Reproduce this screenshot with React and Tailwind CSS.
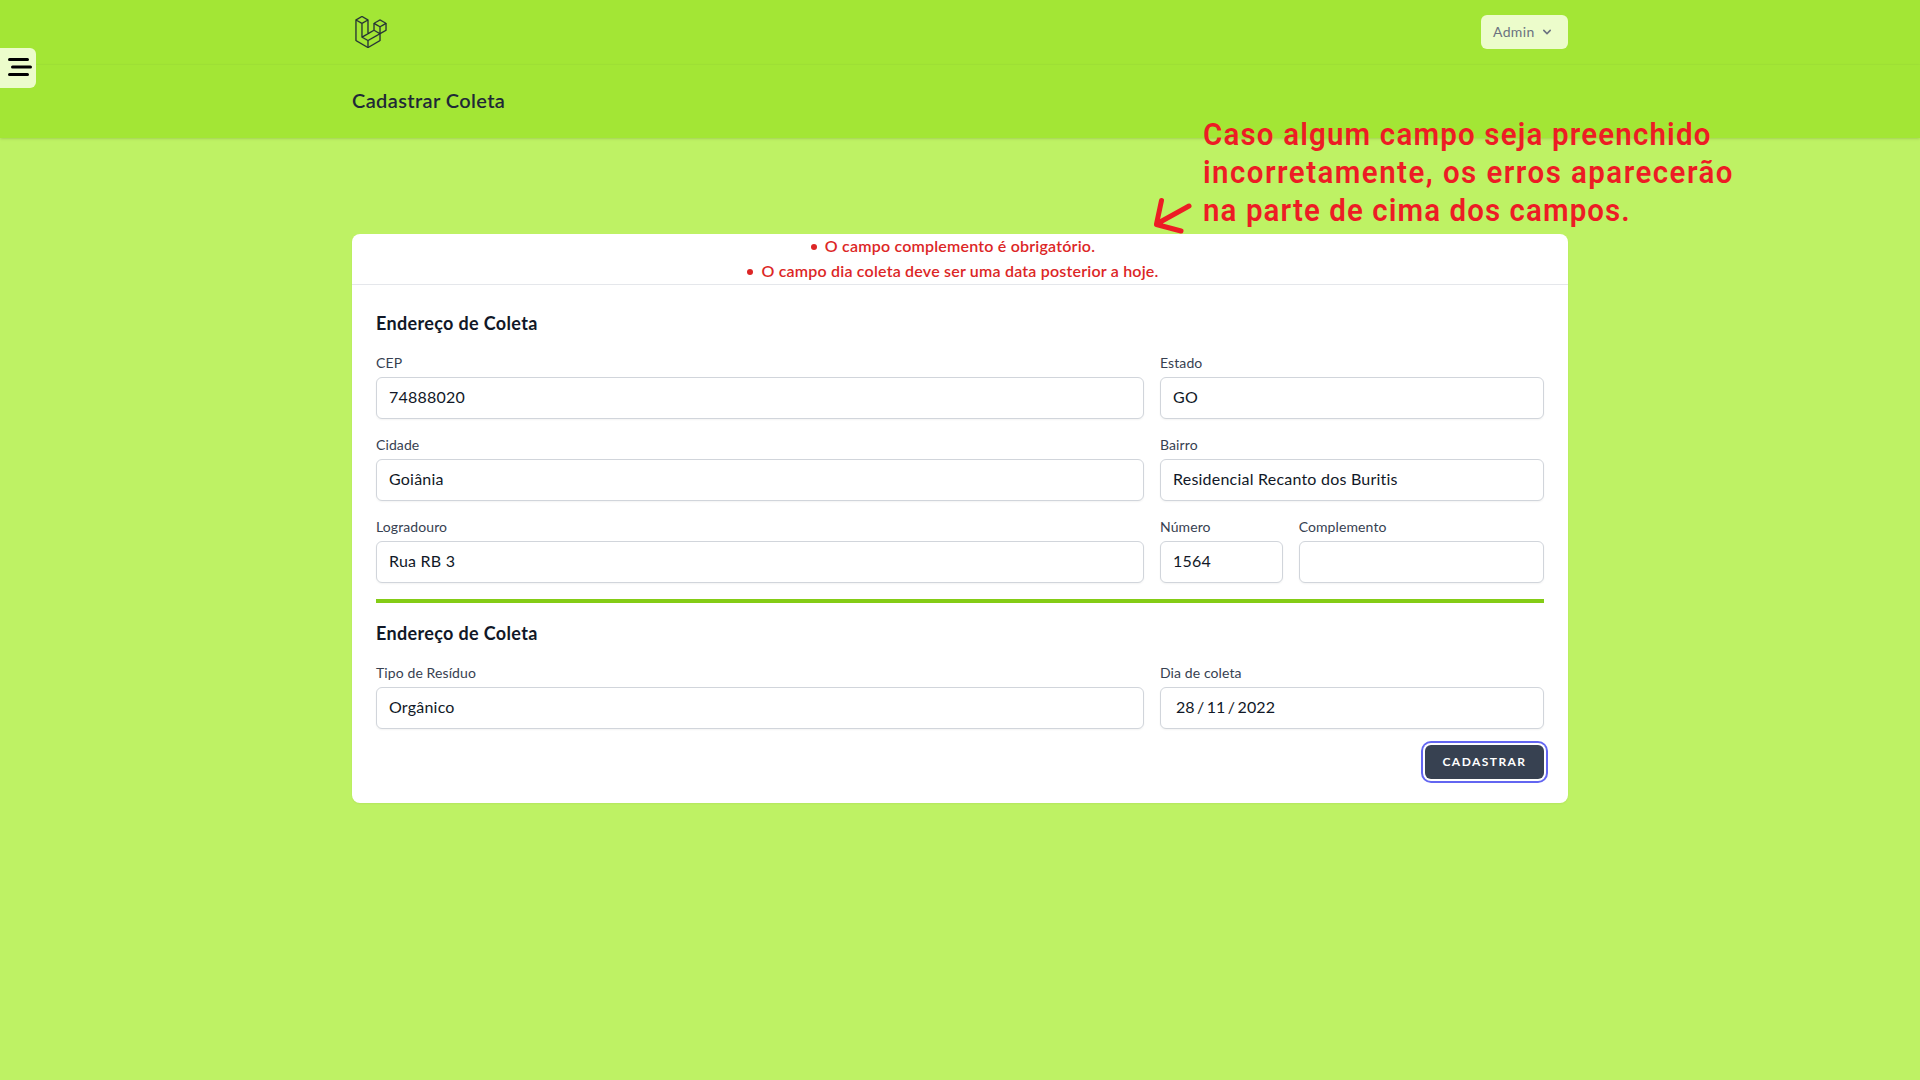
import { SiLaravel } from "react-icons/si";

const Field = ({ label, value, date }) => (
  <div>
    <label className="block text-sm leading-5 tracking-[0.1px] text-[#374151]"><span>{label}</span></label>
    <div className="mt-1 flex h-[42px] items-center rounded-md border border-[#d1d5db] bg-white px-3 pb-0.5 text-base leading-6 text-[#111827] shadow-[0_1px_2px_0_rgba(0,0,0,0.05)]">
      {date ? (
        <span className="ml-[3px] flex gap-[2.5px]">
          <span>28</span><span>/</span><span>11</span><span>/</span><span className="tracking-[0.1px]">2022</span>
        </span>
      ) : (
        <span className="tracking-[0.22px]">{value}</span>
      )}
    </div>
  </div>
);

const ErrorItem = ({ children }) => (
  <li className="-ml-3.5 flex h-[25px] items-center gap-2 pb-0.5">
    <i className="mt-0.5 size-1.5 rounded-full bg-[#dc2626]" />
    <span className="tracking-[0.2px]">{children}</span>
  </li>
);

export default function App() {
  return (
    <div className="relative min-h-screen bg-[#bef264] font-['Lato',sans-serif] text-[#111827]">
      <nav className="h-[65px] border-b border-[#a1e336] bg-[#a3e635]">
        <div className="mx-auto flex h-16 max-w-7xl items-center justify-between px-8">
          <SiLaravel className="ml-[3px] size-8 text-[#1f2937]" stroke="currentColor" strokeWidth="0.2" />
          <button className="flex h-[34px] w-[87px] items-center rounded-md bg-[#ecfccb] pl-[12px] text-sm leading-4 text-[#6b7280]">
            <span className="w-[46px] text-left tracking-[0.35px]">Admin</span>
            <svg className="size-4" viewBox="0 0 20 20" fill="currentColor">
              <path fillRule="evenodd" clipRule="evenodd" d="M5.293 7.293a1 1 0 011.414 0L10 10.586l3.293-3.293a1 1 0 111.414 1.414l-4 4a1 1 0 01-1.414 0l-4-4a1 1 0 010-1.414z" />
            </svg>
          </button>
        </div>
      </nav>
      <header className="bg-[#a3e635] shadow-[0_1px_3px_0_rgba(0,0,0,0.1),0_1px_2px_-1px_rgba(0,0,0,0.1)]">
        <div className="mx-auto max-w-7xl px-8 pt-[23px] pb-[25px]">
          <h2 className="text-xl leading-[25px] font-semibold tracking-[0.38px] text-[#1f2937]"><span>Cadastrar Coleta</span></h2>
        </div>
      </header>

      <main className="mx-auto max-w-7xl px-8 py-24">
        <div className="rounded-lg bg-white shadow-[0_1px_2px_0_rgba(0,0,0,0.05)]">
          <ul className="flex h-[51px] list-none flex-col items-center border-b border-[#e5e7eb] font-semibold text-[#dc2626]">
            <ErrorItem>O campo complemento é obrigatório.</ErrorItem>
            <ErrorItem>O campo dia coleta deve ser uma data posterior a hoje.</ErrorItem>
          </ul>
          <form className="p-6">
            <h3 className="text-lg leading-7 font-bold tracking-[0.34px]"><span>Endereço de Coleta</span></h3>
            <div className="mt-4 grid grid-cols-[2fr_1fr] gap-4">
              <Field label="CEP" value="74888020" />
              <Field label="Estado" value="GO" />
              <Field label="Cidade" value="Goiânia" />
              <Field label="Bairro" value="Residencial Recanto dos Buritis" />
              <Field label="Logradouro" value="Rua RB 3" />
              <div className="grid grid-cols-[1fr_2fr] gap-4">
                <Field label="Número" value="1564" />
                <Field label="Complemento" value="" />
              </div>
            </div>
            <hr className="my-4 border-t-4 border-[#84cc16]" />
            <h3 className="text-lg leading-7 font-bold tracking-[0.34px]"><span>Endereço de Coleta</span></h3>
            <div className="mt-4 grid grid-cols-[2fr_1fr] gap-4">
              <Field label="Tipo de Resíduo" value="Orgânico" />
              <Field label="Dia de coleta" date />
            </div>
            <div className="mt-4 flex justify-end">
              <button type="button" className="flex h-[34px] w-[119px] items-center justify-center rounded-md bg-[#374151] text-xs font-bold tracking-[1.45px] text-white ring-2 ring-[#6366f1] ring-offset-2 ring-offset-white">
                <span>CADASTRAR</span>
              </button>
            </div>
          </form>
        </div>
      </main>

      <button className="absolute top-12 left-0 h-10 w-9 rounded-r-md bg-[#ecfccb]" aria-label="Menu">
        <svg className="size-full" viewBox="0 0 36 40" stroke="#000" strokeWidth="3" strokeLinecap="round">
          <path d="M9.5 11.5h18M12.5 19h18M9.5 26.5h18" />
        </svg>
      </button>

      <svg className="absolute top-[190px] left-[1150px] h-[50px] w-[50px]" viewBox="0 0 50 50" fill="none" stroke="#ed1c24" strokeWidth="5" strokeLinecap="round" strokeLinejoin="round">
        <path d="M11.5 10.5 6.5 34 39 16M6.5 34.5 31 41" />
      </svg>
      <p className="absolute top-[115px] left-[1203px] origin-left scale-x-[0.92] font-['Roboto',sans-serif] text-[32px] leading-[38px] font-semibold whitespace-nowrap text-[#ed1c24]">
        <span className="tracking-[1.3px]">Caso algum campo seja preenchido</span><br />
        <span className="tracking-[1.6px]">incorretamente, os erros aparecerão</span><br />
        <span className="tracking-[1.2px]">na parte de cima dos campos.</span>
      </p>
    </div>
  );
}
